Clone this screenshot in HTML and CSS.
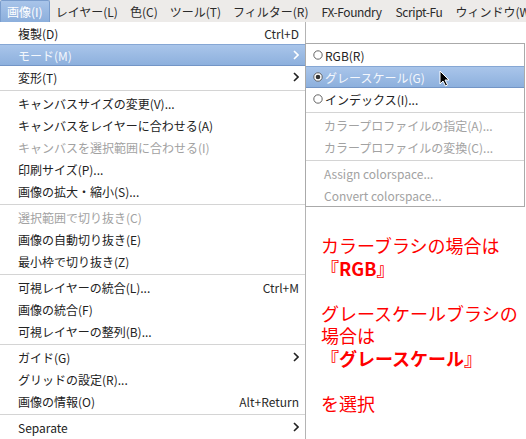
FILE: index.html
```html
<!DOCTYPE html>
<html lang="ja">
<head>
<meta charset="utf-8">
<link rel="stylesheet" href="styles.css">
</head>
<body>
<div class="menubar">
  <span class="mb-item active">画像(I)</span>
  <span class="mb-item">レイヤー(L)</span>
  <span class="mb-item">色(C)</span>
  <span class="mb-item">ツール(T)</span>
  <span class="mb-item">フィルター(R)</span>
  <span class="mb-item latin">FX-Foundry</span>
  <span class="mb-item latin">Script-Fu</span>
  <span class="mb-item">ウィンドウ(W)</span>
</div>
<div class="workspace">
  <div class="menu main">
    <div class="item"><span>複製(D)</span><span class="accel">Ctrl+D</span></div>
    <div class="item hl"><span>モード(M)</span><svg class="chev" width="6" height="10" viewBox="0 0 6 10"><polyline points="1,1 5,5 1,9"/></svg></div>
    <div class="item"><span>変形(T)</span><svg class="chev" width="6" height="10" viewBox="0 0 6 10"><polyline points="1,1 5,5 1,9"/></svg></div>
    <div class="sep"></div>
    <div class="item"><span>キャンバスサイズの変更(V)...</span></div>
    <div class="item"><span>キャンバスをレイヤーに合わせる(A)</span></div>
    <div class="item dis"><span>キャンバスを選択範囲に合わせる(I)</span></div>
    <div class="item"><span>印刷サイズ(P)...</span></div>
    <div class="item"><span>画像の拡大・縮小(S)...</span></div>
    <div class="sep"></div>
    <div class="item dis"><span>選択範囲で切り抜き(C)</span></div>
    <div class="item"><span>画像の自動切り抜き(E)</span></div>
    <div class="item"><span>最小枠で切り抜き(Z)</span></div>
    <div class="sep"></div>
    <div class="item"><span>可視レイヤーの統合(L)...</span><span class="accel">Ctrl+M</span></div>
    <div class="item"><span>画像の統合(F)</span></div>
    <div class="item"><span>可視レイヤーの整列(B)...</span></div>
    <div class="sep"></div>
    <div class="item"><span>ガイド(G)</span><svg class="chev" width="6" height="10" viewBox="0 0 6 10"><polyline points="1,1 5,5 1,9"/></svg></div>
    <div class="item"><span>グリッドの設定(R)...</span></div>
    <div class="item"><span>画像の情報(O)</span><span class="accel">Alt+Return</span></div>
    <div class="sep"></div>
    <div class="item"><span>Separate</span><svg class="chev" width="6" height="10" viewBox="0 0 6 10"><polyline points="1,1 5,5 1,9"/></svg></div>
  </div>
  <div class="side">
    <div class="menu sub">
      <div class="sitem"><svg class="radio" width="10" height="10" viewBox="0 0 10 10"><circle cx="5" cy="5" r="4.2"/></svg><span>RGB(R)</span></div>
      <div class="sitem hl"><svg class="radio on" width="10" height="10" viewBox="0 0 10 10"><circle cx="5" cy="5" r="4.2"/><circle class="dot" cx="5" cy="5" r="2.3"/></svg><span>グレースケール(G)</span></div>
      <div class="sitem"><svg class="radio" width="10" height="10" viewBox="0 0 10 10"><circle cx="5" cy="5" r="4.2"/></svg><span>インデックス(I)...</span></div>
      <div class="sep"></div>
      <div class="sitem plain dis"><span>カラープロファイルの指定(A)...</span></div>
      <div class="sitem plain dis"><span>カラープロファイルの変換(C)...</span></div>
      <div class="sep"></div>
      <div class="sitem plain dis"><span>Assign colorspace...</span></div>
      <div class="sitem plain dis"><span>Convert colorspace...</span></div>
    </div>
    <div class="note">
      <div class="line">カラーブラシの場合は</div>
      <div class="line strong">『RGB』</div>
      <div class="line gap">グレースケールブラシの</div>
      <div class="line">場合は</div>
      <div class="line strong">『グレースケール』</div>
      <div class="line gap">を選択</div>
    </div>
  </div>
  <svg class="cursor" width="12" height="17" viewBox="0 0 12 17"><polygon points="1,1 1,14 4,11 6.5,16 8.5,15 6,10 10,10"/></svg>
</div>
</body>
</html>
```

FILE: styles.css
```css
* { box-sizing: border-box; }
html, body { margin: 0; padding: 0; }
body {
  width: 526px;
  height: 439px;
  overflow: hidden;
  background: #ffffff;
  font-family: "Noto Sans CJK JP", "Noto Sans", sans-serif;
  font-size: 12px;
  color: #222222;
}
.menubar {
  height: 22px;
  display: flex;
  align-items: stretch;
  background: #edebe9;
  white-space: nowrap;
  overflow: hidden;
}
.mb-item {
  display: flex;
  align-items: center;
  flex: none;
  padding: 0 6px;
  color: #2a2a2a;
}
.mb-item.latin { letter-spacing: -0.4px; padding: 0 7px; }
.mb-item.active {
  color: #ffffff;
  background: linear-gradient(#a8c4e9, #8cafdc);
  border: 1px solid #7a9dcd;
  border-bottom: none;
  border-radius: 2px 2px 0 0;
}
.workspace {
  position: relative;
  display: flex;
  height: 417px;
}
.menu { background: #ffffff; }
.main {
  width: 306px;
  flex: none;
  border-right: 1px solid #b4b4b4;
  overflow: hidden;
}
.item {
  height: 22px;
  display: flex;
  align-items: center;
  justify-content: space-between;
  padding: 0 6px 0 18px;
  white-space: nowrap;
}
.item.hl, .sitem.hl {
  background: linear-gradient(#a9c5ea, #8db0dd);
  border-top: 1px solid #86a7d4;
  border-bottom: 1px solid #7395c6;
  color: #f4f7fc;
}
.dis { color: #a2a2a2; }
.accel { color: #2a2a2a; }
.chev { flex: none; }
.chev polyline { fill: none; stroke: #222; stroke-width: 1.6; }
.hl .chev polyline { stroke: #ffffff; }
.sep {
  height: 1px;
  margin: 2px 0 1px;
  background: #d4d4d4;
}
.side {
  flex: 1;
  display: flex;
  flex-direction: column;
}
.sub {
  margin: 21px 0 0 -1px;
  width: 220px;
  border: 1px solid #aaaaaa;
}
.sitem {
  height: 22px;
  display: flex;
  align-items: center;
  gap: 2px;
  padding-left: 7px;
  white-space: nowrap;
}
.sitem.plain { padding-left: 18px; }
.radio { flex: none; }
.radio circle { fill: #ffffff; stroke: #555555; stroke-width: 0.9; }
.radio .dot { fill: #333333; stroke: none; }
.note {
  margin-top: 27px;
  padding-left: 15px;
  color: #ff0000;
  font-size: 18px;
  line-height: 22.5px;
  white-space: nowrap;
}
.line.strong { font-weight: bold; }
.line.gap { margin-top: 22.5px; }
.cursor {
  position: absolute;
  left: 439px;
  top: 48px;
}
.cursor polygon { fill: #000000; stroke: #ffffff; stroke-width: 1; stroke-linejoin: round; }
```
